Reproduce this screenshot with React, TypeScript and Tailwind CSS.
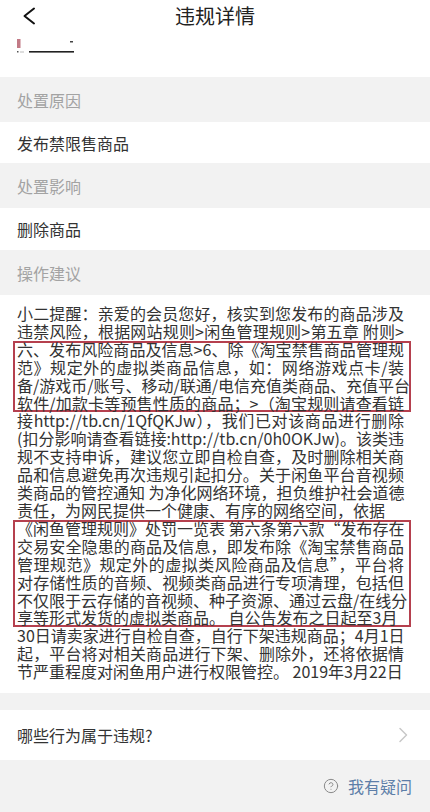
import { CircleHelp } from "lucide-react";
import clsx from "clsx";

const lines = [
  "小二提醒：亲爱的会员您好，核实到您发布的商品涉及",
  "违禁风险，根据网站规则>闲鱼管理规则>第五章 附则>",
  "六、发布风险商品及信息>6、除《淘宝禁售商品管理规",
  "范》规定外的虚拟类商品信息，如：网络游戏点卡/装",
  "备/游戏币/账号、移动/联通/电信充值类商品、充值平台",
  "软件/加款卡等预售性质的商品；>（淘宝规则请查看链",
  "接http://tb.cn/1QfQKJw），我们已对该商品进行删除",
  "(扣分影响请查看链接:http://tb.cn/0h0OKJw)。该类违",
  "规不支持申诉，建议您立即自检自查，及时删除相关商",
  "品和信息避免再次违规引起扣分。关于闲鱼平台音视频",
  "类商品的管控通知 为净化网络环境，担负维护社会道德",
  "责任，为网民提供一个健康、有序的网络空间，依据",
  "《闲鱼管理规则》处罚一览表 第六条第六款“发布存在",
  "交易安全隐患的商品及信息，即发布除《淘宝禁售商品",
  "管理规范》规定外的虚拟类风险商品及信息”，平台将",
  "对存储性质的音频、视频类商品进行专项清理，包括但",
  "不仅限于云存储的音视频、种子资源、通过云盘/在线分",
  "享等形式发货的虚拟类商品。 自公告发布之日起至3月",
  "30日请卖家进行自检自查，自行下架违规商品；4月1日",
  "起，平台将对相关商品进行下架、删除外，还将依据情",
  "节严重程度对闲鱼用户进行权限管控。 2019年3月22日",
];

// 行末不对齐的行
const loose = new Set([11, 17, 20]);

function Line({ i }: { i: number }) {
  return (
    <div
      className={clsx(
        "w-[387px] whitespace-nowrap",
        !loose.has(i) && "text-justify [text-align-last:justify]"
      )}
    >
      {lines[i]}
    </div>
  );
}

function Marked({ from, to }: { from: number; to: number }) {
  const ids = [];
  for (let i = from; i <= to; i++) ids.push(i);
  return (
    <div className="-ml-1 w-[398px] pl-1 ring-2 ring-inset ring-[#b5404e]">
      {ids.map((i) => (
        <Line key={i} i={i} />
      ))}
    </div>
  );
}

function Plain({ from, to }: { from: number; to: number }) {
  const ids = [];
  for (let i = from; i <= to; i++) ids.push(i);
  return (
    <>
      {ids.map((i) => (
        <Line key={i} i={i} />
      ))}
    </>
  );
}

function Label({ text }: { text: string }) {
  return (
    <div className="flex h-[45px] items-center bg-[#f2f2f2] px-[17px] text-[16px] text-[#a3a3a3]">
      {text}
    </div>
  );
}

function Value({ text, h }: { text: string; h: string }) {
  return (
    <div className={clsx("flex items-center bg-white px-[17px] text-[16px] text-[#333]", h)}>
      {text}
    </div>
  );
}

export default function App() {
  return (
    <div className="flex min-h-[812px] w-[430px] flex-col bg-[#f2f2f2] font-['Noto_Sans_CJK_SC',sans-serif] text-[#333]">
      {/* 顶部 */}
      <div className="bg-white">
        <div className="grid h-8 grid-cols-[1fr_auto_1fr] items-center">
          <div className="pl-[22px]">
            <svg width="14" height="18" viewBox="0 0 14 18" fill="none">
              <polyline
                points="12,1.5 2.5,9 12,16.5"
                stroke="#111"
                strokeWidth="2"
                strokeLinecap="round"
                strokeLinejoin="round"
              />
            </svg>
          </div>
          <div className="text-[20px] text-[#222]">违规详情</div>
          <div />
        </div>
        <div className="h-[45px] pl-[17px] pt-[6px]">
          <svg width="60" height="18" viewBox="0 0 60 18">
            <rect x="0" y="1" width="3.5" height="9" fill="#c27a86" />
            <rect x="0" y="13" width="1.5" height="1.5" fill="#555" />
            <rect x="3" y="13.5" width="4" height="1" fill="#bbb" />
            <rect x="12" y="13" width="45" height="1.6" fill="#222" />
            <rect x="53" y="3" width="3" height="1.5" fill="#444" />
          </svg>
        </div>
      </div>

      <Label text="处置原因" />
      <Value text="发布禁限售商品" h="h-[41px]" />
      <Label text="处置影响" />
      <Value text="删除商品" h="h-[42px]" />
      <Label text="操作建议" />

      {/* 建议正文 */}
      <div className="bg-white px-[17px] pb-[12px] pt-[10px] text-[16px] leading-[17.9px] text-[#333]">
        <Plain from={0} to={1} />
        <Marked from={2} to={5} />
        <Plain from={6} to={11} />
        <Marked from={12} to={17} />
        <Plain from={18} to={20} />
      </div>

      <div className="h-[17px]" />

      <div className="flex h-[50px] items-center justify-between bg-white pl-[17px] pr-[22px] text-[16px] text-[#333]">
        <span>哪些行为属于违规?</span>
        <svg width="10" height="16" viewBox="0 0 10 16" fill="none">
          <polyline
            points="2,1.5 8.5,8 2,14.5"
            stroke="#c8c8c8"
            strokeWidth="1.5"
            strokeLinecap="round"
            strokeLinejoin="round"
          />
        </svg>
      </div>

      <div className="flex h-[52px] items-center justify-end gap-[9px] pr-[18px]">
        <CircleHelp size={16} strokeWidth={1.5} className="text-[#8a8a8a]" />
        <span className="text-[16px] text-[#5d7ea8]">我有疑问</span>
      </div>
    </div>
  );
}
